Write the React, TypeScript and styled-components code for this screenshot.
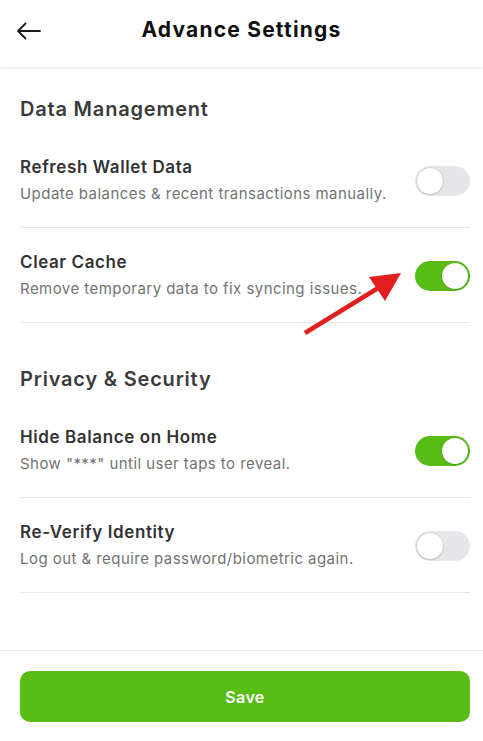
import React, { useState } from "react";
import styled, { createGlobalStyle } from "styled-components";

const GlobalStyle = createGlobalStyle`
  * { box-sizing: border-box; }
  html, body { margin: 0; padding: 0; background: #ffffff; }
  body { font-family: "Inter", "Noto Sans", "Liberation Sans", sans-serif; }
`;

type Setting = { id: string; title: string; desc: string; on: boolean };

const dataItems: Setting[] = [
  { id: "refresh", title: "Refresh Wallet Data", desc: "Update balances & recent transactions manually.", on: false },
  { id: "cache", title: "Clear Cache", desc: "Remove temporary data to fix syncing issues.", on: true },
];

const privacyItems: Setting[] = [
  { id: "hide", title: "Hide Balance on Home", desc: 'Show "***" until user taps to reveal.', on: true },
  { id: "verify", title: "Re-Verify Identity", desc: "Log out & require password/biometric again.", on: false },
];

function App() {
  const [state, setState] = useState<Record<string, boolean>>(() => {
    const s: Record<string, boolean> = {};
    [...dataItems, ...privacyItems].forEach((i) => (s[i.id] = i.on));
    return s;
  });
  const flip = (id: string) => setState((p) => ({ ...p, [id]: !p[id] }));

  const renderRows = (items: Setting[]) =>
    items.map((item) => (
      <SRow key={item.id}>
        <STextCol>
          <SRowTitle>{item.title}</SRowTitle>
          <SRowDesc>{item.desc}</SRowDesc>
        </STextCol>
        <SToggle $on={state[item.id]} onClick={() => flip(item.id)} aria-label={item.title}>
          <SKnob $on={state[item.id]} />
        </SToggle>
      </SRow>
    ));

  return (
    <SPage>
      <GlobalStyle />
      <SHeader>
        <SBackButton aria-label="back">
          <svg width="26" height="18" viewBox="0 0 26 18" fill="none">
            <path d="M24 9H2M9.5 1.5L2 9l7.5 7.5" stroke="#1c1c1c" strokeWidth="1.8" strokeLinecap="round" strokeLinejoin="round" />
          </svg>
        </SBackButton>
        <STitle>Advance Settings</STitle>
      </SHeader>

      <SContent>
        <SSection>
          <SSectionTitle>Data Management</SSectionTitle>
          {renderRows(dataItems)}
        </SSection>
        <SSection>
          <SSectionTitle>Privacy &amp; Security</SSectionTitle>
          {renderRows(privacyItems)}
        </SSection>

        {/* annotation arrow pointing at the Clear Cache toggle */}
        <SArrow width="110" height="72" viewBox="0 0 110 72">
          <path d="M4 68L82 20" stroke="#e21f1f" strokeWidth="4.5" strokeLinecap="butt" />
          <polygon points="100,8 68,12 84,36" fill="#e21f1f" />
        </SArrow>
      </SContent>

      <SFooter>
        <SSaveButton>Save</SSaveButton>
      </SFooter>
    </SPage>
  );
}

const SPage = styled.div`
  width: 483px;
  height: 741px;
  display: flex;
  flex-direction: column;
  background: #ffffff;
  overflow: hidden;
`;

const SHeader = styled.header`
  position: relative;
  height: 67px;
  padding-bottom: 7px;
  display: flex;
  align-items: center;
  justify-content: center;
  background: #ffffff;
  box-shadow: 0 1px 3px rgba(0, 0, 0, 0.12);
  z-index: 1;
`;

const SBackButton = styled.button`
  position: absolute;
  left: 16px;
  top: 22px;
  border: none;
  background: transparent;
  padding: 0;
  display: flex;
  cursor: pointer;
`;

const STitle = styled.h1`
  margin: 0;
  font-size: 21px;
  line-height: 28px;
  font-weight: 700;
  color: #111111;
  letter-spacing: 1.2px;
`;

const SContent = styled.main`
  position: relative;
  flex: 1;
  padding: 28px 13px 0 20px;
  display: flex;
  flex-direction: column;
  gap: 42px;
`;

const SSection = styled.section`
  display: flex;
  flex-direction: column;
`;

const SSectionTitle = styled.h2`
  margin: 0 0 10px;
  font-size: 20px;
  line-height: 28px;
  font-weight: 600;
  color: #3b3b3b;
  letter-spacing: 0.8px;
`;

const SRow = styled.div`
  display: flex;
  align-items: center;
  justify-content: space-between;
  padding: 22px 0;
  border-bottom: 1px solid #e6e6e6;
`;

const STextCol = styled.div`
  display: flex;
  flex-direction: column;
  gap: 4px;
`;

const SRowTitle = styled.div`
  font-size: 17px;
  line-height: 24px;
  font-weight: 600;
  color: #333333;
  letter-spacing: 0.6px;
`;

const SRowDesc = styled.div`
  font-size: 15px;
  line-height: 22px;
  color: #737373;
  letter-spacing: 0.45px;
`;

const SToggle = styled.button<{ $on: boolean }>`
  position: relative;
  width: 55px;
  height: 30px;
  border-radius: 15px;
  border: none;
  padding: 0;
  margin-top: 2px;
  flex-shrink: 0;
  background: ${(p) => (p.$on ? "#58bd17" : "#e6e6ea")};
  cursor: pointer;
`;

const SKnob = styled.span<{ $on: boolean }>`
  position: absolute;
  top: 2px;
  left: ${(p) => (p.$on ? "27px" : "2px")};
  width: 26px;
  height: 26px;
  border-radius: 50%;
  background: #ffffff;
  box-shadow: 0 0 0 0.5px rgba(0, 0, 0, 0.12), 0 1px 2px rgba(0, 0, 0, 0.15);
`;

const SArrow = styled.svg`
  position: absolute;
  left: 301px;
  top: 198px;
`;

const SFooter = styled.footer`
  border-top: 1px solid #e8e8e8;
  padding: 20px 13px 19px 20px;
`;

const SSaveButton = styled.button`
  width: 100%;
  height: 51px;
  border: none;
  border-radius: 10px;
  background: #58bd17;
  color: #ffffff;
  font-family: inherit;
  font-size: 16px;
  font-weight: 600;
  letter-spacing: 0.4px;
  cursor: pointer;
`;

export default App;
